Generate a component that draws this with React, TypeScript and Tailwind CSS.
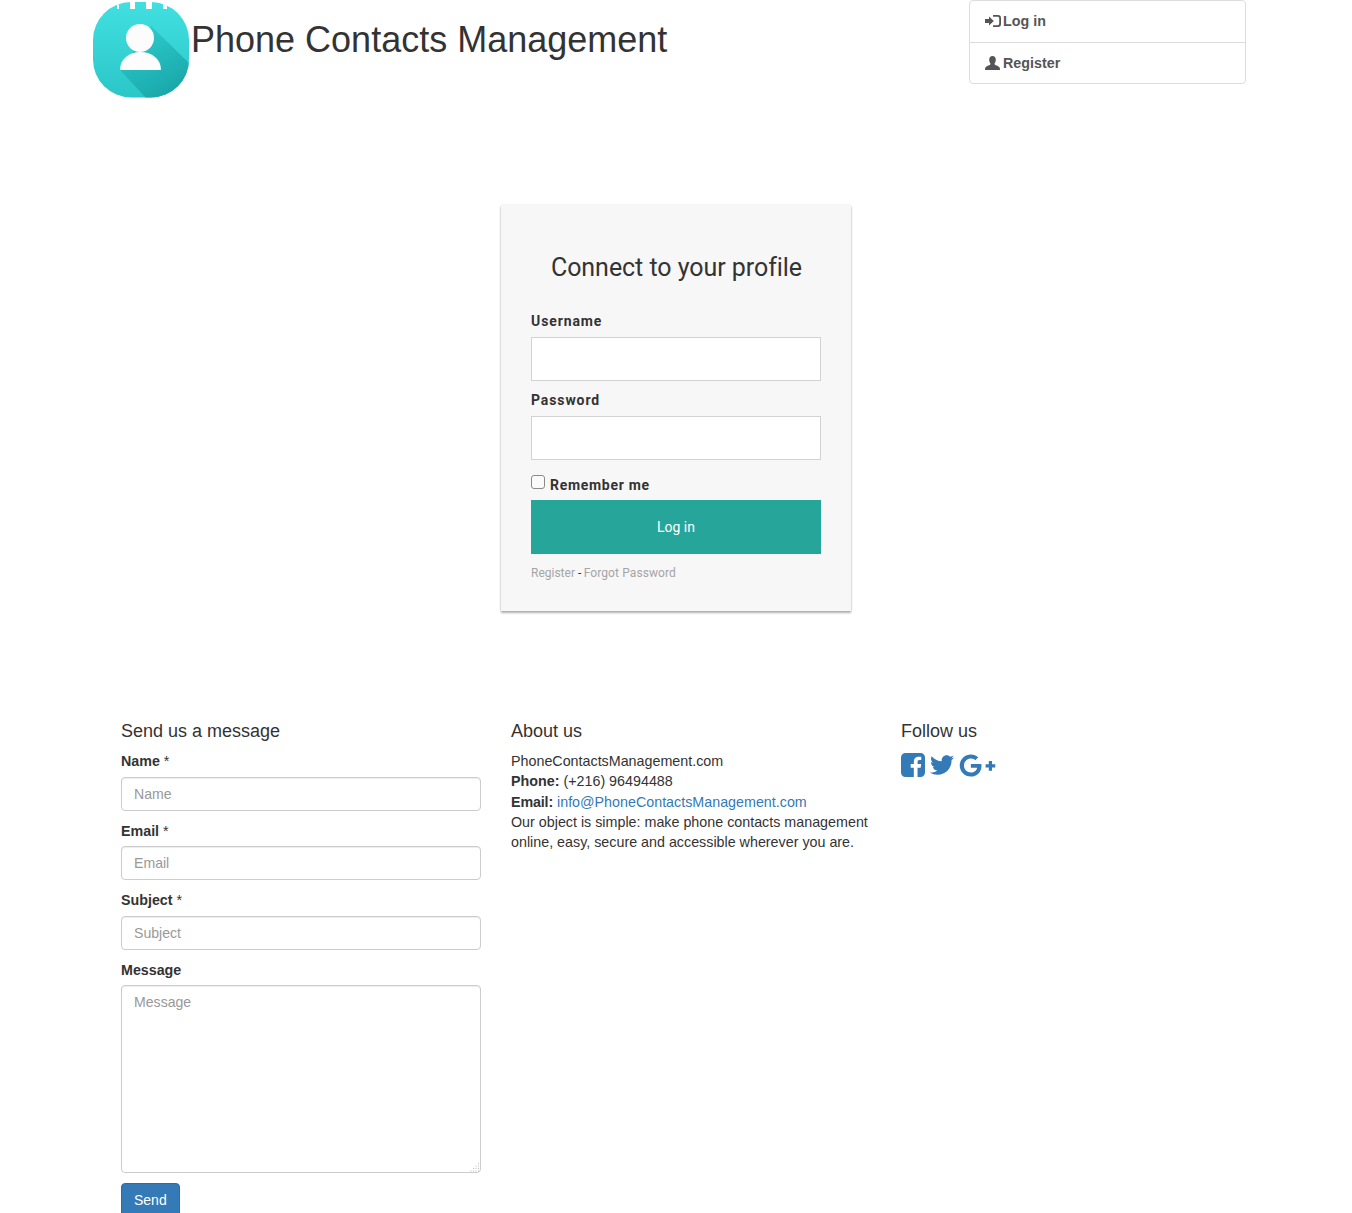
import React from 'react';
import { FaTwitter, FaGooglePlusG } from 'react-icons/fa';

function Logo() {
  return (
    <svg viewBox="0 0 96 96" className="w-[96px] h-[96px] shrink-0">
      <defs>
        <linearGradient id="logoBg" x1="0" y1="0" x2="0" y2="1">
          <stop offset="0" stopColor="#41e0e0" />
          <stop offset="1" stopColor="#2bc6c8" />
        </linearGradient>
        <linearGradient id="logoShadow" x1="0" y1="0" x2="0.6" y2="1">
          <stop offset="0" stopColor="#22bcbe" stopOpacity="0.35" />
          <stop offset="1" stopColor="#1aa8aa" />
        </linearGradient>
        <clipPath id="logoClip">
          <rect x="0" y="0" width="96" height="95.500" rx="38" />
        </clipPath>
      </defs>
      <g clipPath="url(#logoClip)">
        <rect width="96" height="96" fill="url(#logoBg)" />
        <path d="M58 24 L96 61 L96 96 L53 96 L27 68 Z" fill="url(#logoShadow)" />
        <rect x="24" y="0" width="2" height="7" fill="#fff" />
        <rect x="37" y="0" width="5" height="7" fill="#fff" />
        <rect x="53" y="0" width="6" height="7" fill="#fff" />
        <rect x="70" y="0" width="4" height="7" fill="#fff" />
      </g>
      <circle cx="47" cy="36" r="14" fill="#fcfcfd" />
      <path d="M27 68 C27 57 36 50 47.500 50 C59 50 68 57 68 68 Z" fill="#fcfcfd" />
    </svg>
  );
}

function LoginIcon() {
  return (
    <svg viewBox="0 0 16 14" className="w-[16px] h-[14px] shrink-0" fill="currentColor">
      <path d="M0 5h4V2.500L8.800 7 4 11.500V9H0z" />
      <path d="M8 1h5a3 3 0 0 1 3 3v6a3 3 0 0 1-3 3H8v-1.800h4.600c1 0 1.600-.6 1.600-1.600V4.400c0-1-.6-1.600-1.600-1.600H8z" />
    </svg>
  );
}

function UserIcon() {
  return (
    <svg viewBox="0 0 15 14" className="w-[15px] h-[14px] shrink-0" fill="currentColor">
      <path d="M7.500 0C9.600 0 10.800 1.600 10.800 3.800c0 1.600-.6 2.800-1.100 3.500-.3.700-.1 1.300.5 1.600 2 .8 4.200 1.300 4.600 3 .1.600.2 1.400.2 2.100H0c0-.7.1-1.500.2-2.100.4-1.700 2.600-2.200 4.600-3 .6-.3.800-.9.5-1.600-.5-.7-1.100-1.900-1.100-3.500C4.200 1.600 5.400 0 7.500 0z" />
    </svg>
  );
}

function FacebookIcon() {
  return (
    <svg viewBox="128 128 1536 1536" className="w-[24px] h-[24px] shrink-0" fill="currentColor">
      <path d="M1376 128q119 0 203.500 84.500t84.500 203.500v960q0 119-84.500 203.500t-203.500 84.500h-188v-595h199l30-232h-229v-148q0-56 23.500-84t91.500-28l122-1v-207q-63-9-178-9-136 0-217.500 80t-81.500 226v171h-200v232h200v595h-532q-119 0-203.500-84.500t-84.500-203.500v-960q0-119 84.500-203.500t203.500-84.500h960z" />
    </svg>
  );
}

function ResizeGrip() {
  const dots = [[8, 0], [8, 2.5], [5.500, 2.500], [8, 5], [5.500, 5], [3, 5], [8, 7.500], [5.500, 7.500], [3, 7.500], [0.500, 7.500]];
  return (
    <svg viewBox="0 0 10 9" className="absolute right-[1px] bottom-[1px] w-[10px] h-[9px] pointer-events-none" fill="#bdbdbd">
      {dots.map(([x, y]) => <rect key={`${x}-${y}`} x={x} y={y} width="1" height="1" />)}
    </svg>
  );
}

function FooterField({ label, placeholder }: { label: string; placeholder: string }) {
  return (
    <div className="mb-[10px]">
      <label className="block text-[14.28px] leading-[20px] font-bold mb-[5.500px]">
        {label}<span className="font-normal"> *</span>
      </label>
      <input
        type="text"
        placeholder={placeholder}
        className="block w-full h-[34px] px-[12px] border border-[#ccc] rounded-[4px] text-[14.1px] bg-white shadow-[inset_0_1px_1px_rgba(0,0,0,0.075)] placeholder:text-[#999] outline-none"
      />
    </div>
  );
}

export default function App() {
  return (
    <div className="h-[1213px] overflow-hidden bg-white text-[#333] text-[14.3px] leading-[20.4px] font-['Liberation_Sans',Arial,sans-serif]">
      <div className="w-[1170px] mx-auto">
        {/* Header */}
        <header className="flex h-[205px]">
          <div className="flex flex-1 items-start">
            <div className="mt-[2px] ml-[2px]"><Logo /></div>
            <h1 className="text-[36px] leading-[40px] font-normal mt-[20px] ml-[2px]">Phone Contacts Management</h1>
          </div>
          <div className="w-[277px] h-[84px] mr-[15px] border border-[#ddd] rounded-[4px] font-bold text-[#555]">
            <a className="flex items-center gap-[2px] h-[42px] px-[15px] pb-[1px] border-b border-[#ddd]"><LoginIcon />Log in</a>
            <a className="flex items-center gap-[3px] h-[41px] px-[15px] pb-[1px]"><UserIcon />Register</a>
          </div>
        </header>

        {/* Login card */}
        <div className="w-[350px] h-[406px] mx-auto p-[30px] bg-[#f7f7f7] shadow-[0_2px_2px_rgba(0,0,0,0.3),0_0_2px_rgba(0,0,0,0.12)] font-['Roboto',sans-serif]">
          <h2 className="text-[25px] leading-[30px] text-center font-normal text-[#333] -tracking-[0.05px] mt-[18px] mb-[28px] pl-[1px]">Connect to your profile</h2>
          <label className="block text-[14px] leading-[20px] font-bold tracking-[0.9px] mb-[6px]">Username</label>
          <input type="text" className="block w-full h-[44px] bg-white border border-[#d2d2d2] outline-none mb-[9px]" />
          <label className="block text-[14px] leading-[20px] font-bold tracking-[0.9px] mb-[6px]">Password</label>
          <input type="password" className="block w-full h-[44px] bg-white border border-[#d2d2d2] outline-none mb-[14px]" />
          <div className="flex items-start h-[26px]">
            <input type="checkbox" className="appearance-none w-[14px] h-[14px] mt-[1px] mr-[5px] bg-[#fafafa] border border-[#8a8a8a] rounded-[3px]" />
            <label className="text-[14px] leading-[20px] font-bold tracking-[0.7px] mt-[1px]">Remember me</label>
          </div>
          <button className="block w-full h-[54px] bg-[#26a69a] text-white text-[14px]">Log in</button>
          <div className="mt-[9px] text-[12px] leading-[20px] text-[#333]">
            <a className="text-[#a5a5a5]">Register</a> - <a className="text-[#a5a5a5] tracking-[0.1px] -ml-[0.6px]">Forgot Password</a>
          </div>
        </div>

        {/* Footer */}
        <footer className="grid grid-cols-[390px_390px_360px] mt-[110px] pl-[30px]">
          <div className="w-[360px]">
            <h4 className="text-[18px] leading-[20px] font-normal mb-[10px]">Send us a message</h4>
            <FooterField label="Name" placeholder="Name" />
            <FooterField label="Email" placeholder="Email" />
            <FooterField label="Subject" placeholder="Subject" />
            <div className="mb-[10px]">
              <label className="block text-[14.28px] leading-[20px] font-bold mb-[5px]">Message</label>
              <div className="relative">
                <textarea
                  placeholder="Message"
                  className="block w-full h-[188px] px-[12px] py-[6px] border border-[#ccc] rounded-[4px] text-[14.1px] bg-white shadow-[inset_0_1px_1px_rgba(0,0,0,0.075)] placeholder:text-[#999] outline-none resize-none"
                />
                <ResizeGrip />
              </div>
            </div>
            <button className="block h-[34px] px-[12px] pt-[2px] bg-[#337ab7] border border-[#2e6da4] rounded-[4px] text-white text-[14px]">Send</button>
          </div>
          <div className="w-[360px]">
            <h4 className="text-[18px] leading-[20px] font-normal mb-[9.800px]">About us</h4>
            <p>PhoneContactsManagement.com</p>
            <p><b>Phone:</b> (+216) 96494488</p>
            <p><b className="-tracking-[0.15px]">Email:</b> <a className="text-[#337ab7]">info@PhoneContactsManagement.com</a></p>
            <p>Our object is simple: make phone contacts management online, easy, secure and accessible wherever you are.</p>
          </div>
          <div className="w-[360px]">
            <h4 className="text-[18px] leading-[20px] font-normal mb-[12px]">Follow us</h4>
            <div className="flex items-center gap-[5px] h-[24px] text-[#337ab7] text-[24px]">
              <FacebookIcon />
              <FaTwitter />
              <FaGooglePlusG className="text-[37px]" />
            </div>
          </div>
        </footer>
      </div>
    </div>
  );
}
